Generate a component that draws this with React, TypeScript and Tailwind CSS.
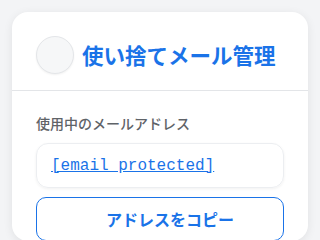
import React from 'react';

const jp = { fontFamily: '"Noto Sans CJK JP", "Noto Sans", sans-serif' };

export default function App() {
  return (
    <div className="min-h-screen bg-[#f3f4f6] p-3" style={jp}>
      <div className="rounded-2xl bg-white shadow-[0_2px_10px_rgba(0,0,0,0.08)]">
        <div className="flex items-center gap-2 px-6 pt-6 pb-4 border-b border-[#e3e5e8]">
          <div className="w-[38px] h-[38px] rounded-full bg-[#f6f7f8] border border-[#e4e6e9] shadow-[0_1px_2px_rgba(0,0,0,0.06)]" />
          <h1 className="text-[21.5px] font-semibold text-[#1a73e8] leading-none">使い捨てメール管理</h1>
        </div>
        <div className="px-6 pt-[22px]">
          <p className="text-sm font-medium text-[#5f6368] leading-5">使用中のメールアドレス</p>
          <div className="mt-[10px] h-[45px] flex items-center px-[14px] rounded-xl border border-[#eceef1] shadow-[0_1px_3px_rgba(0,0,0,0.06)]">
            <a href="#" className="text-base text-[#1a73e8] underline" style={{ fontFamily: '"Liberation Mono", monospace' }}>
              [email&nbsp;protected]
            </a>
          </div>
          <button className="mt-[9px] w-full h-[44px] flex items-center justify-center gap-1 rounded-[10px] border border-[#1a73e8] bg-white text-base font-bold text-[#1a73e8]">
            <span className="w-4" />
            アドレスをコピー
          </button>
        </div>
      </div>
    </div>
  );
}
